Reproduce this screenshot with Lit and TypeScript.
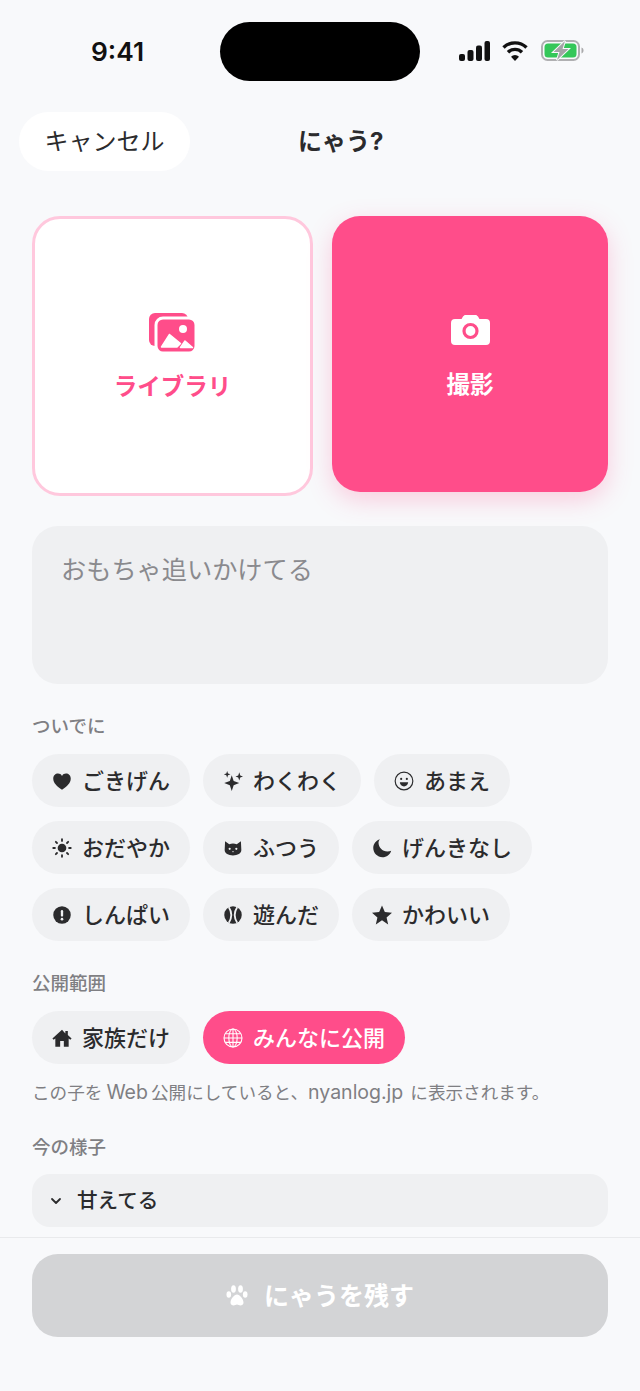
import { LitElement, html, svg, css } from 'lit';
import { customElement } from 'lit/decorators.js';

const ICONS = {
  heart: svg`<path d="M12 22.500C6 18.300 1.500 14.300 1.500 8.900 1.500 5.500 4.100 3 7.200 3c2 0 3.700 1 4.800 2.900C13.100 4 14.800 3 16.800 3c3.100 0 5.700 2.500 5.700 5.900 0 5.400-4.500 9.400-10.500 13.600z"/>`,
  sparkles: svg`<path d="M10.500 5l2.300 6.900 6.700 2.600-6.700 2.600-2.300 6.900-2.300-6.900L1.500 14.500l6.700-2.600z"/><path d="M19.500 1.500l1.200 3.800 3.300 1.200-3.300 1.200-1.200 3.800-1.200-3.800L15 6.500l3.300-1.200z"/><path d="M5 0l1 3 3 1-3 1-1 3-1-3-3-1 3-1z"/>`,
  smile: svg`<circle cx="12" cy="12" r="10.600" fill="none" stroke="currentColor" stroke-width="1.400"/><circle cx="8.600" cy="9.500" r="1.300"/><circle cx="15.400" cy="9.500" r="1.300"/><path d="M7 13.500h10c-.3 3-2.400 5-5 5s-4.700-2-5-5z"/>`,
  sun: svg`<circle cx="12" cy="12" r="5.200"/><g stroke="currentColor" stroke-width="2.200" stroke-linecap="round"><path d="M12 1.500v2M12 20.500v2M1.500 12h2M20.500 12h2M4.600 4.600l1.400 1.400M18 18l1.400 1.400M4.600 19.400L6 18M18 6l1.400-1.400"/></g>`,
  cat: svg`<path d="M2.500 4l5 3.500a11 11 0 0 1 9 0l5-3.500.5 10.500c0 4-4.500 6.500-10 6.500S2 18.500 2 14.500z"/><g fill="#eff0f2"><circle cx="8" cy="13" r="1.300"/><circle cx="16" cy="13" r="1.300"/><path d="M10.800 16h2.400L12 17.300z"/></g>`,
  moon: svg`<path d="M9.500 1.500C4.900 2.900 1.500 7.100 1.500 12.100c0 6.100 5 11 11 11 5 0 9.200-3.300 10.500-7.900-1.400.6-2.900.9-4.500.9C12.400 16.100 7.800 11.500 7.800 5.400c0-1.400.6-2.700 1.700-3.900z"/>`,
  alert: svg`<circle cx="12" cy="12" r="10.500"/><rect x="10.600" y="6" width="2.800" height="8" rx="1.400" fill="#eff0f2"/><circle cx="12" cy="17" r="1.600" fill="#eff0f2"/>`,
  ball: svg`<circle cx="12" cy="12" r="10.500"/><path d="M7 2.800c3.600 5.600 3.600 12.800 0 18.400M17 2.800c-3.600 5.600-3.600 12.800 0 18.400" fill="none" stroke="#eff0f2" stroke-width="2.200"/>`,
  star: svg`<path d="M12 .5l3.400 7.900 8.600.8-6.500 5.700 1.900 8.400L12 18.400l-7.400 4.900 1.900-8.400L0 9.200l8.600-.8z"/>`,
  home: svg`<path d="M12 2L.5 12.500l1.500 1.700L4 12.500V22.500h5.800v-7h4.400v7H20v-10l2 1.700 1.500-1.700-4.500-4V3.500h-3v3.200z"/>`,
  globe: svg`<g fill="none" stroke="currentColor" stroke-width="1.300"><circle cx="12" cy="12" r="10.800"/><ellipse cx="12" cy="12" rx="5" ry="10.800"/><path d="M12 1.200v21.600M1.200 12h21.600M3 6.800h18M3 17.200h18"/></g>`,
};

type IconName = keyof typeof ICONS;

interface Chip {
  icon: IconName;
  label: string;
  active?: boolean;
}

const MOODS: Chip[] = [
  { icon: 'heart', label: 'ごきげん' },
  { icon: 'sparkles', label: 'わくわく' },
  { icon: 'smile', label: 'あまえ' },
  { icon: 'sun', label: 'おだやか' },
  { icon: 'cat', label: 'ふつう' },
  { icon: 'moon', label: 'げんきなし' },
  { icon: 'alert', label: 'しんぱい' },
  { icon: 'ball', label: '遊んだ' },
  { icon: 'star', label: 'かわいい' },
];

const VISIBILITY: Chip[] = [
  { icon: 'home', label: '家族だけ' },
  { icon: 'globe', label: 'みんなに公開', active: true },
];

@customElement('app-root')
export class AppRoot extends LitElement {
  static styles = css`
    :host {
      display: block;
      width: 640px;
      height: 1391px;
      overflow: hidden;
      background: #f8f9fb;
      color: #2b2b2d;
      font-family: Inter, 'Noto Sans CJK JP', sans-serif;
    }
    .status {
      display: flex;
      align-items: center;
      height: 59px;
      padding: 22px 0 0 91px;
    }
    .time {
      width: 129px;
      font-size: 26.300px;
      font-weight: 600;
      color: #111;
      line-height: 59px;
    }
    .island {
      width: 200px;
      height: 59px;
      border-radius: 30px;
      background: #000;
    }
    .status-icons {
      display: flex;
      align-items: center;
      gap: 12px;
      margin-left: 39px;
      margin-top: -2px;
    }
    .status-icons svg {
      display: block;
    }
    .nav {
      display: flex;
      align-items: center;
      margin: 31px 0 0 19px;
    }
    .cancel {
      width: 171px;
      height: 59px;
      border-radius: 30px;
      background: #fff;
      font-size: 24px;
      line-height: 59px;
      text-align: center;
    }
    .title {
      margin-left: 108px;
      padding-bottom: 4px;
      font-size: 24px;
      font-weight: 700;
    }
    .content {
      padding: 0 32px;
    }
    .cards {
      display: grid;
      grid-template-columns: 281px 276px;
      align-items: start;
      gap: 19px;
      margin-top: 45px;
    }
    .card {
      display: flex;
      flex-direction: column;
      align-items: center;
      box-sizing: border-box;
      border-radius: 28px;
      font-size: 23.500px;
      font-weight: 700;
      line-height: 34px;
    }
    .library {
      height: 280px;
      padding-top: 93px;
      gap: 17px;
      border: 3px solid #ffc8dd;
      background: #fff;
      color: #ff4d8a;
    }
    .camera {
      height: 276px;
      padding-top: 99px;
      gap: 23px;
      background: #ff4d8a;
      color: #fff;
      box-shadow: 0 8px 24px rgba(255, 77, 138, 0.25);
    }
    .note {
      height: 158px;
      box-sizing: border-box;
      margin-top: 30px;
      padding: 26px 29px;
      border-radius: 26px;
      background: #eff0f2;
      color: #8a8a8e;
      font-size: 25.200px;
      line-height: 36px;
    }
    .label {
      margin-top: 30px;
      font-size: 18.500px;
      font-weight: 500;
      line-height: 24px;
      color: #7f7f83;
    }
    .chips {
      display: flex;
      flex-wrap: wrap;
      gap: 14px 13px;
      margin-top: 16px;
    }
    .chip {
      display: flex;
      align-items: center;
      gap: 10px;
      height: 53px;
      padding: 0 20px;
      border-radius: 27px;
      background: #eff0f2;
      font-size: 22px;
      font-weight: 500;
    }
    .chip span {
      padding-bottom: 4px;
    }
    .chip svg {
      flex: none;
      width: 20px;
      height: 20px;
      fill: currentColor;
    }
    .chip.active {
      background: #ff4d8a;
      color: #fff;
    }
    .hint {
      height: 24px;
      margin-top: 16px;
      font-size: 17.600px;
      line-height: 24px;
      color: #7f7f83;
    }
    .latin {
      font-size: 19.500px;
    }
    .latin.web {
      margin: 0 3px 0 4px;
    }
    .latin.domain {
      margin-right: 7px;
    }
    .label.now {
      margin-top: 31px;
    }
    .select {
      display: flex;
      align-items: center;
      gap: 15px;
      height: 53px;
      margin-top: 15px;
      padding-left: 18px;
      border-radius: 18px;
      background: #eff0f2;
      font-size: 20.600px;
      font-weight: 500;
    }
    .select span {
      padding-bottom: 4px;
    }
    .footer {
      margin-top: 10px;
      padding: 16px 32px 0;
      border-top: 1px solid #e9eaec;
    }
    .submit {
      display: flex;
      align-items: center;
      justify-content: center;
      gap: 16px;
      height: 83px;
      border-radius: 26px;
      background: #d3d4d6;
      color: #fff;
      font-size: 25px;
      font-weight: 700;
    }
    .submit span {
      padding-bottom: 4px;
    }
  `;

  private _chip(c: Chip) {
    return html`<div class="chip ${c.active ? 'active' : ''}">
      <svg viewBox="0 0 24 24">${ICONS[c.icon]}</svg>
      <span>${c.label}</span>
    </div>`;
  }

  protected render() {
    return html`
      <div class="status">
        <div class="time">9:41</div>
        <div class="island"></div>
        <div class="status-icons">
          <svg width="31" height="20" viewBox="0 0 31 20" fill="#111">
            <rect x="0" y="13" width="6" height="7" rx="2" />
            <rect x="8.500" y="9" width="6" height="11" rx="2" />
            <rect x="17" y="4.500" width="6" height="15.500" rx="2" />
            <rect x="25.500" y="0" width="5.500" height="20" rx="2" />
          </svg>
          <svg width="26" height="20" viewBox="0 0 26 20" fill="none" stroke="#111" stroke-width="3.400">
            <path d="M1.500 6.500a16.500 16.500 0 0 1 23 0" />
            <path d="M6 11.200a10 10 0 0 1 14 0" />
            <path d="M13 20l-4-4.200a5.600 5.600 0 0 1 8 0z" fill="#111" stroke="none" />
          </svg>
          <svg style="margin-left:1px" width="43" height="21" viewBox="0 0 43 21">
            <rect x="1" y="1" width="37" height="19" rx="5.500" fill="none" stroke="#b0b0b2" stroke-width="2" />
            <rect x="3.500" y="3.500" width="32" height="14" rx="3.500" fill="#34c759" />
            <path d="M40.500 7.500c1.300.4 2 1.600 2 3s-.7 2.600-2 3z" fill="#a9a9ab" />
            <path d="M24 1L12.500 12h6l-2.500 8 11.500-11h-6z" fill="#a4a4a7" stroke="#f8f9fb" stroke-width="2" paint-order="stroke" />
          </svg>
        </div>
      </div>

      <div class="nav">
        <div class="cancel">キャンセル</div>
        <div class="title">にゃう?</div>
      </div>

      <div class="content">
        <div class="cards">
          <div class="card library">
            <svg width="47" height="41" viewBox="0 0 47 41">
              <rect x="0" y="1" width="39" height="33" rx="6" fill="#ff4d8a" />
              <rect x="7" y="6" width="40" height="35" rx="7" fill="#ff4d8a" stroke="#fff" stroke-width="3" />
              <circle cx="34" cy="17" r="4" fill="#fff" />
              <path d="M12.500 35l8-12.500 11 9-3.500 3.500z" fill="#fff" stroke="#fff" stroke-width="1.500" stroke-linejoin="round" />
              <path d="M31.500 35.500l4.500-6.500 7.500 6.500z" fill="#fff" stroke="#fff" stroke-width="1.500" stroke-linejoin="round" />
            </svg>
            <span>ライブラリ</span>
          </div>
          <div class="card camera">
            <svg width="39" height="30" viewBox="0 0 39 30">
              <path d="M4 4h6.500l1.500-2.500C12.700.6 13.500 0 14.500 0h10c1 0 1.800.6 2.500 1.500L28.500 4H35a4 4 0 0 1 4 4v18a4 4 0 0 1-4 4H4a4 4 0 0 1-4-4V8a4 4 0 0 1 4-4z" fill="#fff" />
              <circle cx="19.500" cy="16" r="6.500" fill="none" stroke="#ff4d8a" stroke-width="3.200" />
            </svg>
            <span>撮影</span>
          </div>
        </div>

        <div class="note">おもちゃ追いかけてる</div>

        <div class="label">ついでに</div>
        <div class="chips">${MOODS.map((c) => this._chip(c))}</div>

        <div class="label">公開範囲</div>
        <div class="chips">${VISIBILITY.map((c) => this._chip(c))}</div>
        <div class="hint">この子を<span class="latin web">Web</span>公開にしていると、<span class="latin domain">nyanlog.jp</span>に表示されます。</div>

        <div class="label now">今の様子</div>
        <div class="select">
          <svg width="12" height="8" viewBox="0 0 12 8" fill="none" stroke="#2b2b2d" stroke-width="1.800" stroke-linecap="round" stroke-linejoin="round">
            <path d="M2 2l4 4 4-4" />
          </svg>
          <span>甘えてる</span>
        </div>
      </div>

      <div class="footer">
        <div class="submit">
          <svg width="22" height="22" viewBox="0 0 22 22" fill="#fff">
            <ellipse cx="2.800" cy="9.500" rx="2.300" ry="3.300" />
            <ellipse cx="7.500" cy="4" rx="2.400" ry="3.800" />
            <ellipse cx="14.500" cy="4" rx="2.400" ry="3.800" />
            <ellipse cx="19.200" cy="9.500" rx="2.300" ry="3.300" />
            <path d="M11 9.500c2.800 0 6.500 4.700 6.500 8 0 2.200-1.700 3-3 3-1.500 0-2.300-1-3.500-1s-2 1-3.500 1c-1.300 0-3-.8-3-3 0-3.300 3.700-8 6.500-8z" />
          </svg>
          <span>にゃうを残す</span>
        </div>
      </div>
    `;
  }
}
